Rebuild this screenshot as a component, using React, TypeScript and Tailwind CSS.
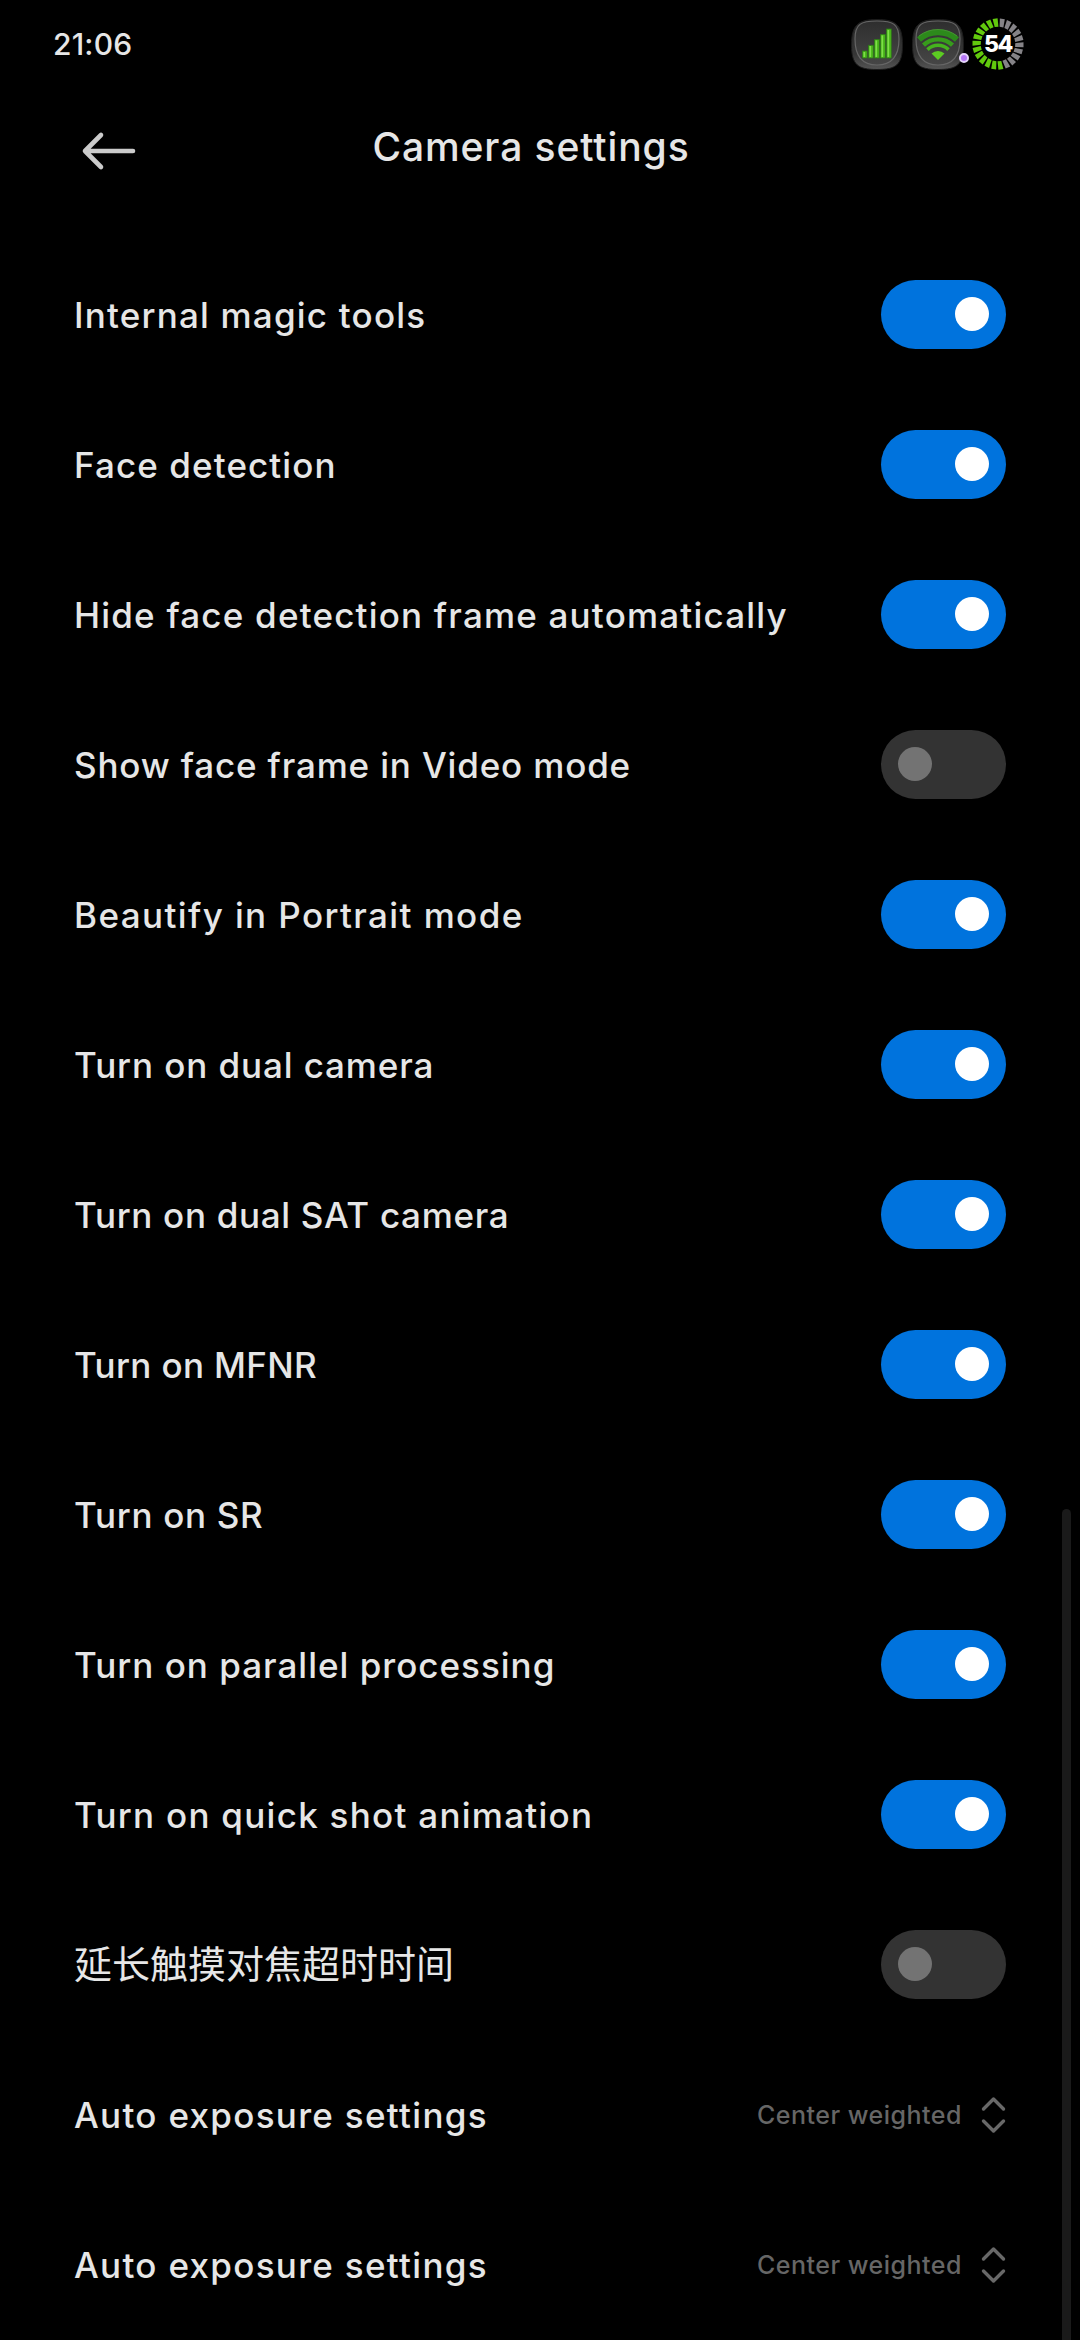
import React, { useState } from "react";
import clsx from "clsx";

type ToggleItem = {
  label: string;
  enabled: boolean;
  className: string;
};

const toggleItems: ToggleItem[] = [
  { label: "Internal magic tools", enabled: true, className: "pt-[2px] tracking-[1.2px]" },
  { label: "Face detection", enabled: true, className: "pt-[2px] tracking-[1.1px]" },
  { label: "Hide face detection frame automatically", enabled: true, className: "pt-[2px] tracking-[1.2px]" },
  { label: "Show face frame in Video mode", enabled: false, className: "pt-[2px] tracking-[0.84px]" },
  { label: "Beautify in Portrait mode", enabled: true, className: "pt-[2px] tracking-[1.4px]" },
  { label: "Turn on dual camera", enabled: true, className: "pt-[2px] tracking-[0.9px]" },
  { label: "Turn on dual SAT camera", enabled: true, className: "pt-[2px] tracking-[0.68px]" },
  { label: "Turn on MFNR", enabled: true, className: "pt-[2px] tracking-[0.35px]" },
  { label: "Turn on SR", enabled: true, className: "pt-[2px] tracking-[0.7px]" },
  { label: "Turn on parallel processing", enabled: true, className: "pt-[2px] tracking-[1px]" },
  { label: "Turn on quick shot animation", enabled: true, className: "pt-[2px] tracking-[1.27px]" },
  { label: "延长触摸对焦超时时间", enabled: false, className: "text-[38px] font-normal" },
];

const selectItems = [
  { label: "Auto exposure settings", value: "Center weighted" },
  { label: "Auto exposure settings", value: "Center weighted" },
];

const BadgeFrame = ({ id }: { id: string }) => (
  <>
    <defs>
      <linearGradient id={`${id}-rim`} x1="0" y1="0" x2="0" y2="1">
        <stop offset="0" stopColor="#262626" />
        <stop offset="0.7" stopColor="#363636" />
        <stop offset="1" stopColor="#555555" />
      </linearGradient>
      <linearGradient id={`${id}-face`} x1="0" y1="0" x2="0" y2="1">
        <stop offset="0" stopColor="#2e2e2e" />
        <stop offset="1" stopColor="#464646" />
      </linearGradient>
    </defs>
    <path
      d="M26 0.5C45 0.5 51.5 6 51.5 26S45 50.5 26 50.5S0.5 46 0.5 26S7 0.5 26 0.5Z"
      fill={`url(#${id}-rim)`}
      stroke="#1c1c1c"
    />
    <path
      d="M26 2C42 2 48 5 48 20C48 37 41 46 26 46S4 37 4 20C4 5 10 2 26 2Z"
      fill={`url(#${id}-face)`}
      stroke="#666666"
      strokeWidth="1.2"
    />
  </>
);

const SignalIcon = () => (
  <svg width="52" height="51" viewBox="0 0 52 51">
    <BadgeFrame id="signal" />
    <g fill="#4dbb1c" stroke="#2d7c17" strokeWidth="0.8">
      <rect x="11.5" y="32" width="4.6" height="7" />
      <rect x="17.6" y="26.3" width="4.6" height="12.7" />
      <rect x="23.6" y="20.5" width="4.6" height="18.5" />
      <rect x="29.6" y="15.5" width="4.6" height="23.5" />
      <rect x="35.6" y="10" width="4.6" height="29" />
    </g>
    <path d="M13.2 33v5M19.2 27v11M25.2 21.5v16.5M31.2 16.5v21.5M37.2 11v27" stroke="#96ec60" strokeWidth="1" />
  </svg>
);

const WifiIcon = () => (
  <svg width="52" height="51" viewBox="0 0 52 51">
    <BadgeFrame id="wifi" />
    <g fill="none">
      <path d="M7 20.5A28.5 28.5 0 0 1 45 20.5" stroke="#2c8a1b" strokeWidth="6" />
      <path d="M11.5 26.2A21 21 0 0 1 40.5 26.2" stroke="#379c1c" strokeWidth="4.4" />
      <path d="M15.5 30.6A15 15 0 0 1 36.5 30.6" stroke="#45b31e" strokeWidth="3.6" />
      <path d="M7 17A31 31 0 0 1 45 17" stroke="#4c9b38" strokeWidth="0.8" />
    </g>
    <path d="M19.5 34.5A9.500 9.500 0 0 1 32.500 34.500L26 41Z" fill="#5ccc22" />
  </svg>
);

const RING_SEGMENTS = 22;

const BatteryRing = () => (
  <div className="relative h-[52px] w-[52px]">
    <svg width="52" height="52" viewBox="0 0 52 52">
      {Array.from({ length: RING_SEGMENTS }, (_, i) => (
        <path
          key={i}
          d="M23.4 0.6L28.4 0.4L28.4 8.8L24.6 8.8Z"
          fill={i < 10 ? "#858387" : "#62c90d"}
          transform={`rotate(${(i * 360) / RING_SEGMENTS + 10} 26 26)`}
        />
      ))}
    </svg>
    <span className="absolute inset-0 flex items-center justify-center text-[23px] font-extrabold tracking-[-1.5px] text-white">
      54
    </span>
  </div>
);

const StatusBar = () => (
  <div className="flex h-[88px] items-center justify-between pl-[53px] pr-14">
    <span className="text-[30px] font-medium tracking-[0.2px]">21:06</span>
    <div className="flex items-center">
      <SignalIcon />
      <div className="relative ml-[9px]">
        <WifiIcon />
        <span className="absolute -right-[5px] bottom-[7px] h-[10px] w-[10px] rounded-full border-2 border-[#e4d3fa] bg-[#b576f5]" />
      </div>
      <div className="ml-[8px]">
        <BatteryRing />
      </div>
    </div>
  </div>
);

const Header = () => (
  <header className="grid h-[120px] grid-cols-[1fr_auto_1fr] items-center pl-[81px] pr-[99px]">
    <button className="flex h-10 w-14 items-center pt-[5px]" aria-label="Back">
      <svg
        width="56"
        height="40"
        viewBox="0 0 56 40"
        fill="none"
        stroke="#cbcbcb"
        strokeWidth="4.6"
        strokeLinecap="round"
        strokeLinejoin="round"
      >
        <path d="M20 4L4 20L20 36M4 20H52" />
      </svg>
    </button>
    <h1 className="pb-px text-[39px] font-medium tracking-[0.9px]">Camera settings</h1>
    <span />
  </header>
);

const Switch = ({ checked, onChange }: { checked: boolean; onChange: () => void }) => (
  <button
    role="switch"
    aria-checked={checked}
    onClick={onChange}
    className={clsx(
      "flex h-[69px] w-[125px] items-center rounded-full px-[17px]",
      checked ? "justify-end bg-[#0073dd]" : "justify-start bg-[#333333]"
    )}
  >
    <span className={clsx("h-[34px] w-[34px] rounded-full", checked ? "bg-white" : "bg-[#737373]")} />
  </button>
);

const UpDownIcon = () => (
  <svg
    width="26"
    height="38"
    viewBox="0 0 26 38"
    fill="none"
    stroke="#686868"
    strokeWidth="3.4"
    strokeLinecap="round"
    strokeLinejoin="round"
  >
    <path d="M3.5 13L13.5 3L23.5 13M3.5 25L13.5 35L23.5 25" />
  </svg>
);

const App = () => {
  const [items, setItems] = useState(toggleItems);

  const handleToggle = (index: number) => {
    setItems(prev => prev.map((item, i) => (i === index ? { ...item, enabled: !item.enabled } : item)));
  };

  return (
    <div className="relative h-[2340px] w-[1080px] overflow-hidden bg-black font-['Inter','Noto_Sans_CJK_SC',sans-serif] text-[#e6e6e6]">
      <StatusBar />
      <Header />

      <main className="px-[74px] pt-[31px]">
        {items.map((item, index) => (
          <div key={item.label} className="flex h-[150px] items-center justify-between text-[35px] font-medium">
            <span className={clsx("whitespace-nowrap", item.className)}>{item.label}</span>
            <Switch checked={item.enabled} onChange={() => handleToggle(index)} />
          </div>
        ))}

        {selectItems.map((item, index) => (
          <div key={index} className="flex h-[150px] items-center justify-between">
            <span className="pt-[2px] text-[35px] font-medium tracking-[1.3px]">{item.label}</span>
            <div className="flex items-center gap-[18px] pt-px">
              <span className="pt-[2px] text-[25px] font-medium tracking-[0.5px] text-[#666666]">{item.value}</span>
              <UpDownIcon />
            </div>
          </div>
        ))}
      </main>

      {/* scrollbar thumb */}
      <div className="absolute right-[9px] top-[1509px] h-[900px] w-[9px] rounded-full bg-[#1a1a1a]" />
    </div>
  );
};

export default App;
